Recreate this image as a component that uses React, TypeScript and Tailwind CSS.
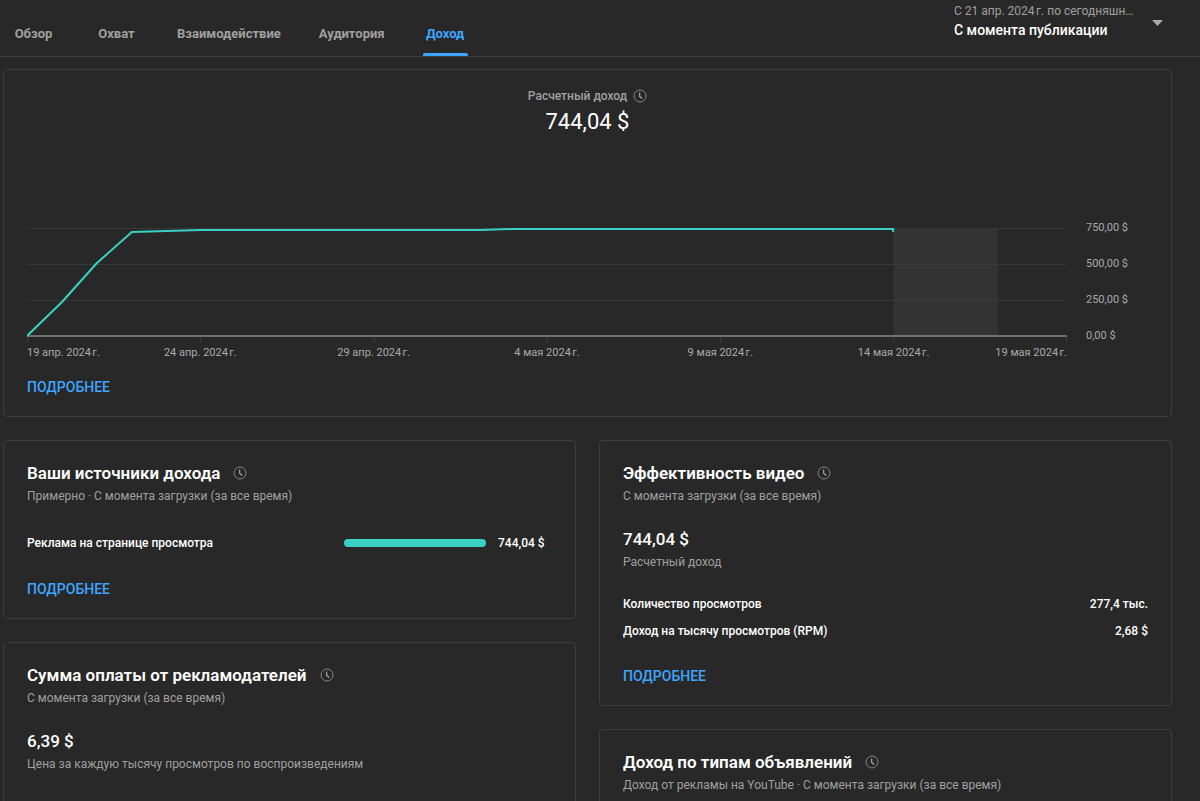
import type { ReactNode } from "react";

const tabs = ["Обзор", "Охват", "Взаимодействие", "Аудитория", "Доход"];

const yLabels = ["750,00 $", "500,00 $", "250,00 $", "0,00 $"];

const firstDate = "19 апр. 2024\u202fг.";
const middleDates = [
  "24 апр. 2024\u202fг.",
  "29 апр. 2024\u202fг.",
  "4 мая 2024\u202fг.",
  "9 мая 2024\u202fг.",
  "14 мая 2024\u202fг.",
];
const lastDate = "19 мая 2024\u202fг.";

const ticks = [0, 173, 347, 520, 694, 867, 1040];

function ClockIcon() {
  return (
    <svg
      className="h-[14px] w-[14px] shrink-0 text-[#858585]"
      viewBox="0 0 14 14"
      fill="none"
      stroke="currentColor"
      aria-hidden="true"
    >
      <circle cx="7" cy="7" r="6" />
      <path d="M6.6 3.6v3.6l2.6 2.2" strokeWidth="1.3" stroke="#a0a0a0" />
    </svg>
  );
}

function Card({ children, className = "" }: { children: ReactNode; className?: string }) {
  return (
    <section className={`rounded-sm border border-[#3d3d3d] px-[23px] pb-[19px] ${className}`}>
      {children}
    </section>
  );
}

function CardTitle({ title, subtitle }: { title: string; subtitle: string }) {
  return (
    <header className="pt-5">
      <div className="flex items-center gap-[13px]">
        <h2 className="text-[17px] leading-6 font-semibold text-white">{title}</h2>
        <ClockIcon />
      </div>
      <p className="text-xs leading-[22px] text-[#a0a0a0]">{subtitle}</p>
    </header>
  );
}

function MoreLink() {
  return (
    <a href="#" className="block w-fit text-[14px] leading-5 font-medium text-[#3ea6ff]">
      ПОДРОБНЕЕ
    </a>
  );
}

function Metric({ value, label }: { value: string; label: string }) {
  return (
    <div className="mt-5">
      <p className="text-[17px] leading-6 font-medium text-white">{value}</p>
      <p className="text-xs leading-[22px] text-[#a0a0a0]">{label}</p>
    </div>
  );
}

function RevenueChart() {
  return (
    <div>
      <div className="flex gap-[19px]">
        <svg
          className="h-[126px] min-w-0 flex-1"
          viewBox="0 0 1041 126"
          preserveAspectRatio="none"
          role="img"
          aria-label="Расчетный доход"
        >
          <rect x="867" y="9" width="105" height="108" fill="#333333" />
          {[9, 45, 81].map((y) => (
            <rect key={y} x="0" y={y} width="1041" height="1" fill="#383838" />
          ))}
          {ticks.map((x) => (
            <rect key={x} x={x} y="118" width="1" height="5" fill="#404040" />
          ))}
          <rect x="0" y="116" width="1041" height="2" fill="#6f6f6f" />
          <polyline
            points="0,117 35,83 70,44 105,13 174,11 453,11 486,10 867,10 867,13"
            fill="none"
            stroke="#38d1c3"
            strokeWidth="2"
            strokeLinejoin="round"
            vectorEffect="non-scaling-stroke"
          />
        </svg>
        <div className="flex w-[62px] flex-col justify-between text-[11px] leading-[18px] text-[#aaaaaa]">
          {yLabels.map((label) => (
            <span key={label}>{label}</span>
          ))}
        </div>
      </div>
      <div className="mr-[81px] grid grid-cols-12 text-center text-[11px] leading-4 whitespace-nowrap text-[#aaaaaa]">
        <span className="text-left">{firstDate}</span>
        {middleDates.map((date) => (
          <span key={date} className="col-span-2">
            {date}
          </span>
        ))}
        <span className="text-right">{lastDate}</span>
      </div>
    </div>
  );
}

function Row({ label, value }: { label: string; value: string }) {
  return (
    <div className="flex justify-between text-xs leading-5 font-medium text-white">
      <dt>{label}</dt>
      <dd>{value}</dd>
    </div>
  );
}

export default function App() {
  return (
    <div className="h-screen overflow-hidden bg-[#282828] font-[Roboto,'Liberation_Sans',sans-serif]">
      <header className="flex h-[57px] justify-between border-b border-[#3d3d3d] pl-[11px]">
        <div role="tablist" className="flex gap-[38px]">
          {tabs.map((tab) => {
            const active = tab === "Доход";
            return (
              <button
                key={tab}
                type="button"
                role="tab"
                aria-selected={active}
                className={`flex min-w-[45px] flex-col items-center justify-between pt-6 text-[13px] leading-5 font-bold ${
                  active ? "text-[#3ea6ff]" : "text-[#a0a0a0]"
                }`}
              >
                {tab}
                {active && <span className="h-[3px] w-full rounded-t-[2px] bg-[#3ea6ff]" />}
              </button>
            );
          })}
        </div>
        <button type="button" className="flex items-start gap-4 pt-px pr-[37px] text-left">
          <span className="block w-[182px]">
            <span className="block text-xs leading-5 text-[#a0a0a0]">
              {"С 21 апр. 2024\u202fг. по сегодняшн…"}
            </span>
            <span className="block text-[14px] leading-[18px] font-medium text-white">
              С момента публикации
            </span>
          </span>
          <svg className="mt-[19px] h-[6px] w-[11px]" viewBox="0 0 11 6" aria-hidden="true">
            <path d="M0 0h11L5.5 6z" fill="#aaaaaa" />
          </svg>
        </button>
      </header>

      <main className="pt-3 pr-7 pl-[3px]">
        <Card className="pt-4">
          <div className="flex flex-col items-center">
            <div className="flex items-center gap-[6px]">
              <h1 className="text-xs leading-5 font-medium text-[#a0a0a0]">Расчетный доход</h1>
              <ClockIcon />
            </div>
            <p className="text-[22px] leading-8 text-white">744,04 $</p>
          </div>
          <div className="mt-[81px] mb-4">
            <RevenueChart />
          </div>
          <MoreLink />
        </Card>

        <div className="mt-[23px] grid grid-cols-2 items-start gap-[23px]">
          <div className="flex flex-col gap-[23px]">
            <Card>
              <CardTitle title="Ваши источники дохода" subtitle="Примерно · С момента загрузки (за все время)" />
              <div className="my-[25px] flex items-center text-xs leading-[22px] font-medium text-white">
                <span className="flex-1">Реклама на странице просмотра</span>
                <span className="mr-3 h-2 w-[27%] rounded-full bg-[#38d1c3]" />
                <span className="w-[54px]">744,04 $</span>
              </div>
              <MoreLink />
            </Card>
            <Card className="min-h-72">
              <CardTitle title="Сумма оплаты от рекламодателей" subtitle="С момента загрузки (за все время)" />
              <Metric value="6,39 $" label="Цена за каждую тысячу просмотров по воспроизведениям" />
            </Card>
          </div>

          <div className="flex flex-col gap-[23px]">
            <Card>
              <CardTitle title="Эффективность видео" subtitle="С момента загрузки (за все время)" />
              <Metric value="744,04 $" label="Расчетный доход" />
              <dl className="mt-[21px] mb-[25px] flex flex-col gap-[7px]">
                <Row label="Количество просмотров" value="277,4 тыс." />
                <Row label="Доход на тысячу просмотров (RPM)" value="2,68 $" />
              </dl>
              <MoreLink />
            </Card>
            <Card className="min-h-72">
              <CardTitle
                title="Доход по типам объявлений"
                subtitle="Доход от рекламы на YouTube · С момента загрузки (за все время)"
              />
            </Card>
          </div>
        </div>
      </main>
    </div>
  );
}
